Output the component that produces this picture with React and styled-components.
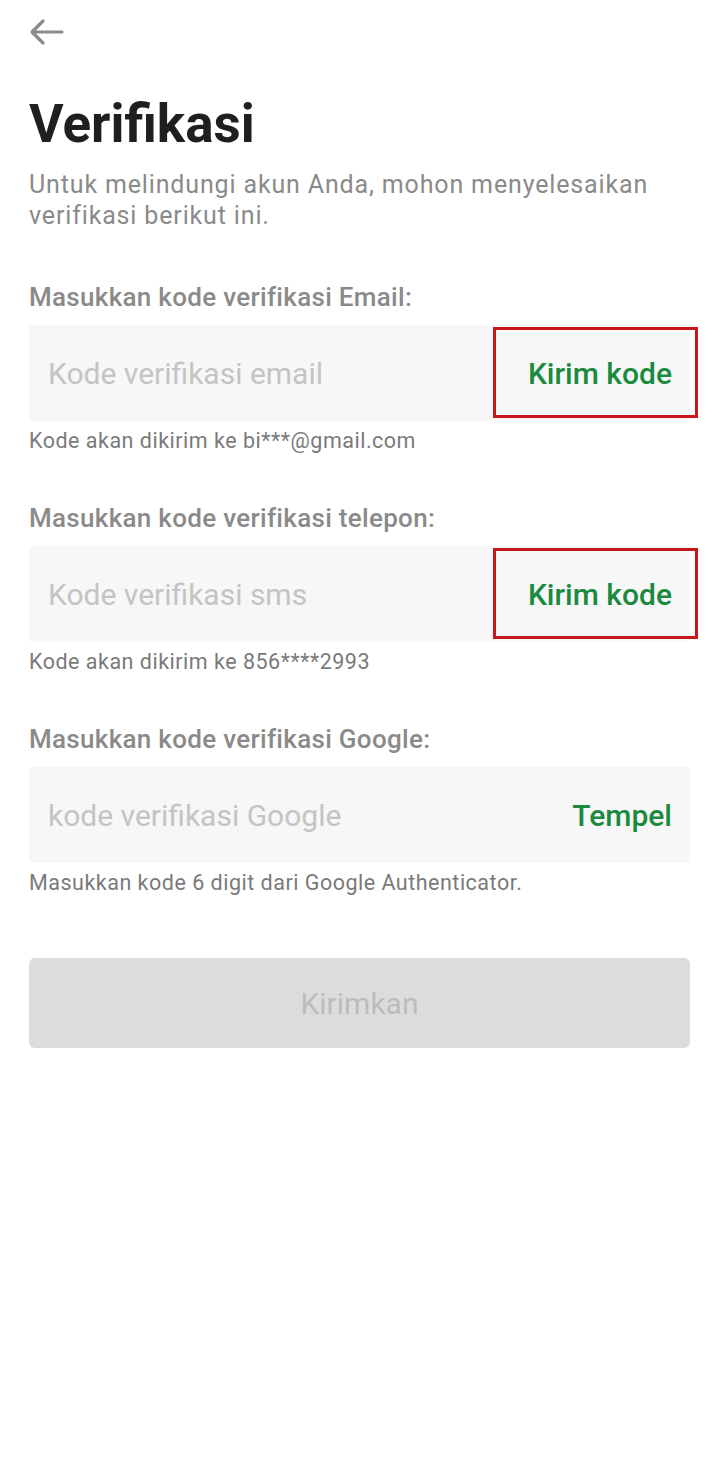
import React from 'react';
import styled, { createGlobalStyle } from 'styled-components';

const GlobalStyle = createGlobalStyle`
  html, body {
    margin: 0;
    padding: 0;
    background: #fff;
  }
  body {
    font-family: Roboto, 'Noto Sans', sans-serif;
  }
`;

const fields = [
  {
    label: 'Masukkan kode verifikasi Email:',
    placeholder: 'Kode verifikasi email',
    action: 'Kirim kode',
    helper: 'Kode akan dikirim ke bi***@gmail.com',
    marked: true,
  },
  {
    label: 'Masukkan kode verifikasi telepon:',
    placeholder: 'Kode verifikasi sms',
    action: 'Kirim kode',
    helper: 'Kode akan dikirim ke 856****2993',
    marked: true,
  },
  {
    label: 'Masukkan kode verifikasi Google:',
    placeholder: 'kode verifikasi Google',
    action: 'Tempel',
    helper: 'Masukkan kode 6 digit dari Google Authenticator.',
    marked: false,
  },
];

const App = () => {
  return (
    <>
      <GlobalStyle />
      <Page>
        <BackButton aria-label='Kembali'>
          <svg width='36' height='28' viewBox='0 0 36 28' fill='none'>
            <path
              d='M33 14H4M14 3L3 14l11 11'
              stroke='#8c8c8c'
              strokeWidth='3.2'
              strokeLinecap='round'
              strokeLinejoin='round'
            />
          </svg>
        </BackButton>
        <Title>Verifikasi</Title>
        <Subtitle>
          Untuk melindungi akun Anda, mohon menyelesaikan verifikasi berikut ini.
        </Subtitle>
        <Form>
          {fields.map((f) => (
            <Field key={f.label}>
              <Label>{f.label}</Label>
              <InputRow>
                <Input placeholder={f.placeholder} />
                <Action>{f.action}</Action>
                {f.marked && <Highlight />}
              </InputRow>
              <Helper>{f.helper}</Helper>
            </Field>
          ))}
        </Form>
        <Submit disabled>Kirimkan</Submit>
      </Page>
    </>
  );
};

export default App;

const Page = styled.div`
  width: 720px;
  min-height: 1470px;
  box-sizing: border-box;
  padding: 18px 30px 0 29px;
  display: flex;
  flex-direction: column;
  background: #fff;
`;

const BackButton = styled.button`
  width: 36px;
  height: 28px;
  padding: 0;
  border: 0;
  background: none;
  display: flex;
  align-items: center;
  margin-bottom: 48px;
`;

const Title = styled.h1`
  margin: 0;
  font-size: 53px;
  line-height: 60px;
  font-weight: 700;
  color: #1f1f1f;
`;

const Subtitle = styled.p`
  margin: 15px 0 0;
  font-size: 25px;
  line-height: 31px;
  letter-spacing: 0.85px;
  color: #8a8a8a;
  max-width: 660px;
`;

const Form = styled.div`
  margin-top: 51px;
  display: flex;
  flex-direction: column;
  gap: 49px;
`;

const Field = styled.div`
  display: flex;
  flex-direction: column;
`;

const Label = styled.div`
  font-size: 26px;
  line-height: 30px;
  font-weight: 500;
  letter-spacing: 0.3px;
  color: #8a8a8a;
  margin-bottom: 13px;
`;

const InputRow = styled.div`
  position: relative;
  height: 96px;
  display: flex;
  align-items: center;
  background: #f7f7f7;
  border-radius: 4px;
  padding: 0 18px 0 19px;
`;

const Input = styled.input`
  flex: 1;
  min-width: 0;
  border: 0;
  outline: none;
  background: transparent;
  font-family: Roboto, sans-serif;
  font-size: 30px;
  color: #333;
  padding: 0;
  &::placeholder {
    color: #c4c4c4;
  }
`;

const Action = styled.span`
  font-size: 30px;
  font-weight: 500;
  color: #1b8a3e;
  white-space: nowrap;
`;

const Highlight = styled.div`
  position: absolute;
  top: 2px;
  bottom: 3px;
  right: -8px;
  width: 205px;
  box-sizing: border-box;
  border: 3px solid #c8161d;
  pointer-events: none;
`;

const Helper = styled.div`
  margin-top: 7px;
  font-size: 21.5px;
  line-height: 26px;
  letter-spacing: 0.5px;
  color: #7a7a7a;
`;

const Submit = styled.button`
  margin-top: 62px;
  height: 90px;
  border: 0;
  border-radius: 6px;
  background: #dcdcdc;
  color: #bcbcbc;
  font-family: Roboto, sans-serif;
  font-size: 30px;
  font-weight: 400;
`;
